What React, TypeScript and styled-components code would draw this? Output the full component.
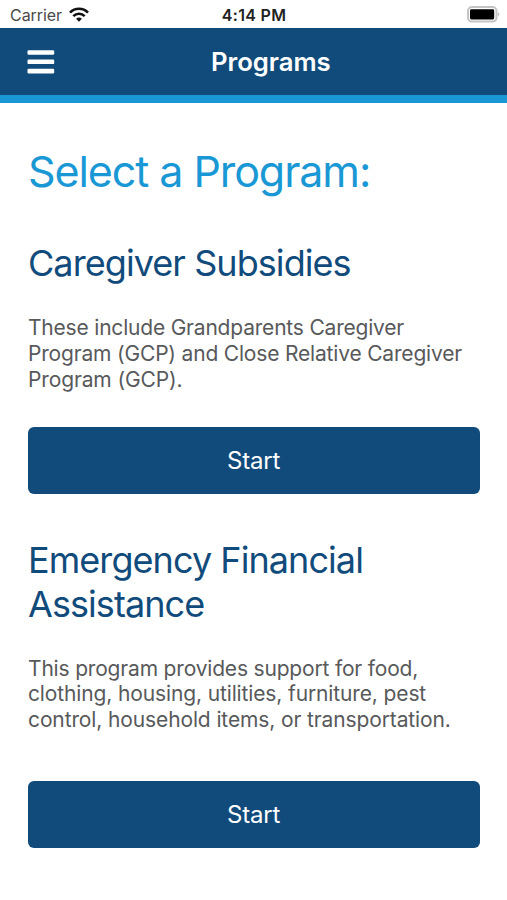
import React from "react";
import styled, { createGlobalStyle } from "styled-components";

const Global = createGlobalStyle`
  * { box-sizing: border-box; }
  body { margin: 0; background: #fff; font-family: Inter, "Liberation Sans", sans-serif; }
  h1, h2, p { margin: 0; font-weight: 400; }
`;
const Screen = styled.div`
  width: 507px; height: 900px; overflow: hidden; background: #fff;
`;
const StatusBar = styled.div`
  height: 28px; display: grid; grid-template-columns: 1fr auto 1fr; align-items: center;
  padding: 1px 7px 0 10px; color: #222;
`;
const Carrier = styled.div`
  display: flex; align-items: center; gap: 7px; color: #4a4a4a;
  font-size: 16px; letter-spacing: -0.05px;
`;
const Clock = styled.span`
  font-size: 16px; font-weight: 600; letter-spacing: 0.3px; white-space: nowrap; margin-right: 2px;
`;
const Battery = styled.div`
  justify-self: end; display: flex;
`;
const NavBar = styled.header`
  height: 75px; background: #114b7c; border-bottom: 8px solid #1a98d5;
  display: grid; grid-template-columns: 184px 1fr; align-items: center; padding: 0 27px; color: #fff;
`;
const MenuButton = styled.button`
  border: 0; padding: 0; background: none; display: flex; justify-self: start;
`;
const NavTitle = styled.span`
  font-size: 25.7px; font-weight: 600; letter-spacing: -0.02px; white-space: nowrap;
`;
const Content = styled.main`padding: 43px 27px 0 28px;`;
const PageTitle = styled.h1`
  font-size: 43px; line-height: 50px; letter-spacing: -1.08px; color: #1a98d5; white-space: nowrap;
`;
const Program = styled.section<{ $top: number }>`margin-top: ${p => p.$top}px;`;
const ProgramTitle = styled.h2`
  font-size: 36px; line-height: 44.5px; letter-spacing: -0.93px; color: #114b7c;
`;
const Description = styled.p<{ $top: number }>`
  margin-top: ${p => p.$top}px; font-size: 21px; line-height: 25.7px; color: #58595b;
`;
const Line = styled.span<{ $space: number }>`
  display: block; white-space: nowrap; letter-spacing: ${p => p.$space}px;
`;
const StartButton = styled.button<{ $top: number }>`
  margin-top: ${p => p.$top}px; width: 452px; height: 67px; display: block; border: 0; border-radius: 6px;
  background: #114b7c; color: #fff; font: 400 24px Inter, sans-serif; letter-spacing: -0.2px; padding: 1px 1px 0 0;
`;

export default function App() {
  return (
    <Screen>
      <Global />
      <StatusBar>
        <Carrier>
          <span>Carrier</span>
          <svg width="20" height="15" viewBox="0 0 20 15" fill="none" stroke="#111" strokeWidth="2.6">
            <path d="M1 5.6C6 .5 14 .5 19 5.6M4.3 9.1C7.6 5.9 12.4 5.9 15.7 9.1" />
            <path d="M10 14.7L7.1 11.8Q10 9.3 12.9 11.8Z" fill="#111" stroke="none" />
          </svg>
        </Carrier>
        <Clock>4:14 PM</Clock>
        <Battery>
          <svg width="33" height="17" viewBox="0 0 33 17">
            <rect x="1" y="1" width="28.5" height="14.6" rx="4" fill="#fff" stroke="#c4c4c4" strokeWidth="2" />
            <rect x="3" y="3.3" width="24.2" height="10.2" rx="1.4" fill="#000" />
            <path d="M31 6.3Q33.5 8.3 31 10.3Z" fill="#bbb" />
          </svg>
        </Battery>
      </StatusBar>
      <NavBar>
        <MenuButton aria-label="Menu">
          <svg width="28" height="24" viewBox="0 0 28 24" fill="#fff">
            <rect x=".5" y=".2" width="26.7" height="4.6" rx="1.2" />
            <rect x=".5" y="9.5" width="26.7" height="4.6" rx="1.2" />
            <rect x=".5" y="18.8" width="26.7" height="4.6" rx="1.2" />
          </svg>
        </MenuButton>
        <NavTitle>Programs</NavTitle>
      </NavBar>
      <Content>
        <PageTitle>Select a Program:</PageTitle>
        <Program $top={45}>
          <ProgramTitle>Caregiver Subsidies</ProgramTitle>
          <Description $top={29.9}>
            <Line $space={-0.2}>These include Grandparents Caregiver</Line>
            <Line $space={-0.18}>Program (GCP) and Close Relative Caregiver</Line>
            <Line $space={-0.13}>Program (GCP).</Line>
          </Description>
          <StartButton $top={34.1}>Start</StartButton>
        </Program>
        <Program $top={44}>
          <ProgramTitle>Emergency Financial<br />Assistance</ProgramTitle>
          <Description $top={29}>
            <Line $space={-0.18}>This program provides support for food,</Line>
            <Line $space={-0.13}>clothing, housing, utilities, furniture, pest</Line>
            <Line $space={-0.12}>control, household items, or transportation.</Line>
          </Description>
          <StartButton $top={48}>Start</StartButton>
        </Program>
      </Content>
    </Screen>
  );
}
